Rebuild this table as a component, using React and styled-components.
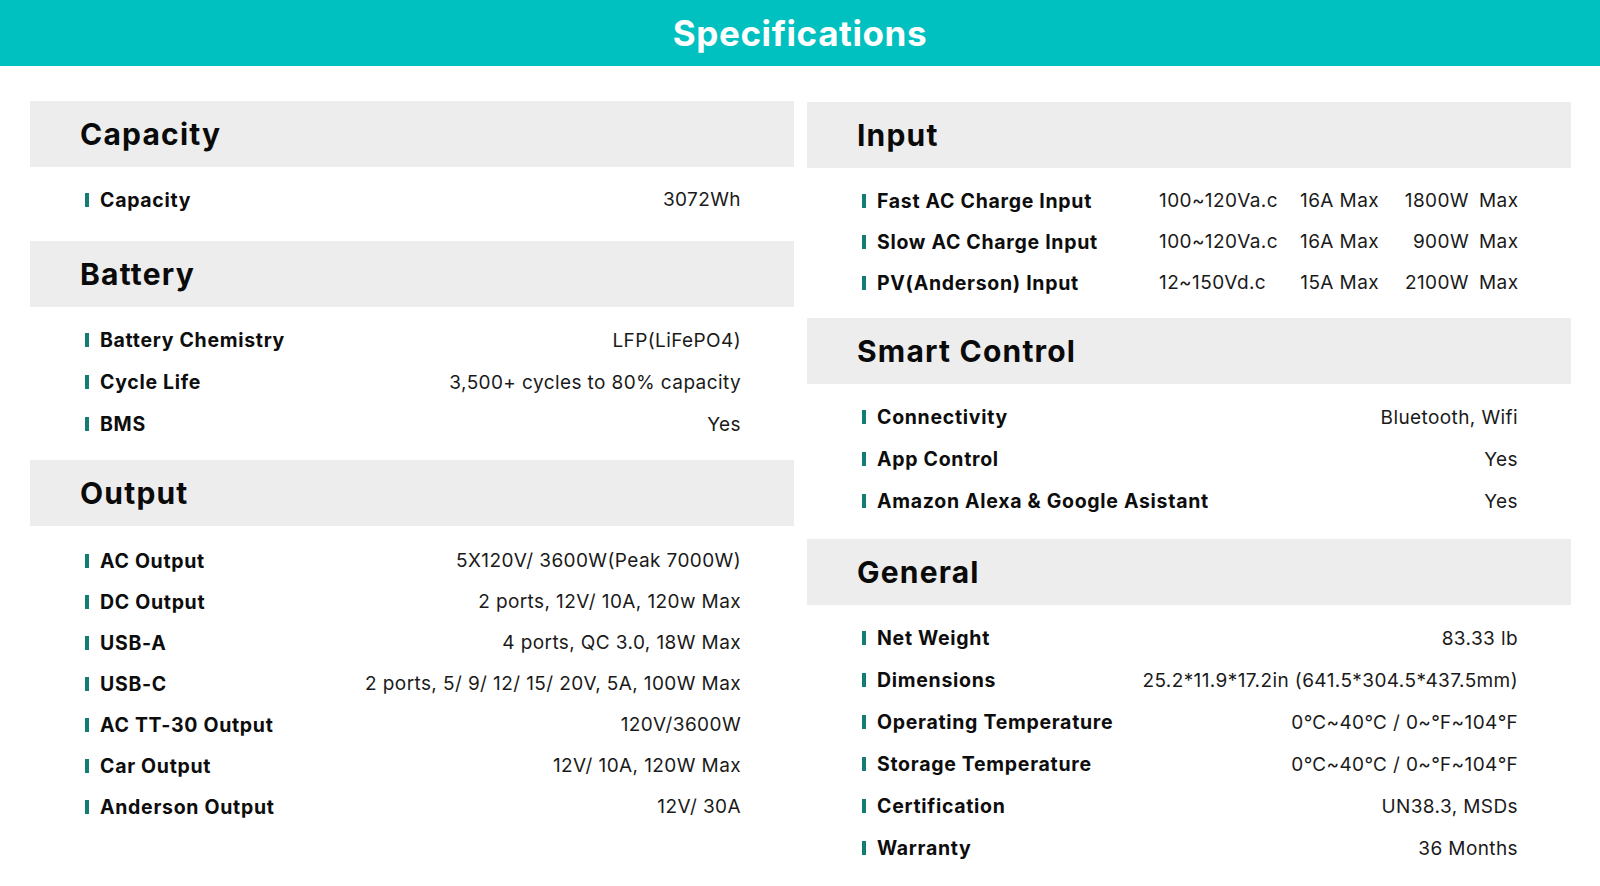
import React from 'react'
import styled, { createGlobalStyle } from 'styled-components'

const GlobalStyle = createGlobalStyle`
body {
  margin: 0;
  background: #fff;
  font-family: Inter, "Liberation Sans", sans-serif;
  color: #111;
}
`

const Banner = styled.header`
height: 66px;
background: #00c1bf;
display: flex;
align-items: center;
justify-content: center;
`
const Title = styled.h1`
margin: 0;
color: #fff;
font-size: 35px;
font-weight: 700;
letter-spacing: 0.6px;
`

const Columns = styled.main`
display: grid;
grid-template-columns: 1fr 1fr;
column-gap: 13px;
padding: 35px 29px 0 30px;
`

const Column = styled.div`
display: flex;
flex-direction: column;
padding-top: ${p => p.offset || 0}px;
`

const Section = styled.section`
padding-bottom: ${p => p.tail}px;
`

const SectionHead = styled.h2`
margin: 0;
height: 66px;
background: #ededed;
display: flex;
align-items: center;
padding-left: 50px;
font-size: 30px;
font-weight: 700;
letter-spacing: 1.2px;
color: #0a0a0a;
`

const Body = styled.div`
padding: ${p => p.top}px 53px 0 55px;
`

const Row = styled.div`
height: ${p => p.h}px;
display: flex;
align-items: center;
justify-content: space-between;
font-size: 19px;
`

const Label = styled.span`
display: flex;
align-items: center;
gap: 11px;
font-size: 19.5px;
font-weight: 700;
letter-spacing: 0.7px;
color: #0d0d0d;
&::before {
  content: '';
  width: 4px;
  height: 14px;
  background: #137c73;
}
`

const Value = styled.span`
font-weight: 400;
letter-spacing: 0.4px;
color: #1a1a1a;
white-space: nowrap;
`

const Parts = styled.span`
display: flex;
font-weight: 400;
letter-spacing: 0.4px;
color: #1a1a1a;
white-space: nowrap;
`

const Part = styled.span`
width: ${p => p.w}px;
margin-left: ${p => p.gap || 0}px;
text-align: ${p => (p.left ? 'left' : 'right')};
`

const left = [
  { title: 'Capacity', top: 12, h: 41, tail: 21, rows: [['Capacity', '3072Wh']] },
  {
    title: 'Battery',
    top: 12,
    h: 42,
    tail: 15,
    rows: [
      ['Battery Chemistry', 'LFP(LiFePO4)'],
      ['Cycle Life', '3,500+ cycles to 80% capacity'],
      ['BMS', 'Yes']
    ]
  },
  {
    title: 'Output',
    top: 14,
    h: 41,
    tail: 0,
    rows: [
      ['AC Output', '5X120V/ 3600W(Peak 7000W)'],
      ['DC Output', '2 ports, 12V/ 10A, 120w Max'],
      ['USB-A', '4 ports, QC 3.0, 18W Max'],
      ['USB-C', '2 ports, 5/ 9/ 12/ 15/ 20V, 5A, 100W Max'],
      ['AC TT-30 Output', '120V/3600W'],
      ['Car Output', '12V/ 10A, 120W Max'],
      ['Anderson Output', '12V/ 30A']
    ]
  }
]

const right = [
  {
    title: 'Input',
    top: 12,
    h: 41,
    tail: 15,
    rows: [
      ['Fast AC Charge Input', ['100~120Va.c', '16A Max', '1800W', 'Max']],
      ['Slow AC Charge Input', ['100~120Va.c', '16A Max', '900W', 'Max']],
      ['PV(Anderson) Input', ['12~150Vd.c', '15A Max', '2100W', 'Max']]
    ]
  },
  {
    title: 'Smart Control',
    top: 12,
    h: 42,
    tail: 17,
    rows: [
      ['Connectivity', 'Bluetooth, Wifi'],
      ['App Control', 'Yes'],
      ['Amazon Alexa & Google Asistant', 'Yes']
    ]
  },
  {
    title: 'General',
    top: 12,
    h: 42,
    tail: 0,
    rows: [
      ['Net Weight', '83.33 lb'],
      ['Dimensions', '25.2*11.9*17.2in (641.5*304.5*437.5mm)'],
      ['Operating Temperature', '0℃~40℃ / 0~℉~104℉'],
      ['Storage Temperature', '0℃~40℃ / 0~℉~104℉'],
      ['Certification', 'UN38.3, MSDs'],
      ['Warranty', '36 Months']
    ]
  }
]

function SpecValue ({ value }) {
  if (!Array.isArray(value)) return <Value>{value}</Value>
  return (
    <Parts>
      <Part w={126} left>{value[0]}</Part>
      <Part w={80} gap={14}>{value[1]}</Part>
      <Part w={80} gap={10}>{value[2]}</Part>
      <Part w={39} gap={10}>{value[3]}</Part>
    </Parts>
  )
}

function SpecSection ({ section }) {
  return (
    <Section tail={section.tail}>
      <SectionHead>{section.title}</SectionHead>
      <Body top={section.top}>
        {section.rows.map(([label, value]) => (
          <Row key={label} h={section.h}>
            <Label>{label}</Label>
            <SpecValue value={value} />
          </Row>
        ))}
      </Body>
    </Section>
  )
}

function App () {
  return (
    <>
      <GlobalStyle />
      <Banner>
        <Title>Specifications</Title>
      </Banner>
      <Columns>
        <Column>
          {left.map(s => <SpecSection key={s.title} section={s} />)}
        </Column>
        <Column offset={1}>
          {right.map(s => <SpecSection key={s.title} section={s} />)}
        </Column>
      </Columns>
    </>
  )
}

export default App
